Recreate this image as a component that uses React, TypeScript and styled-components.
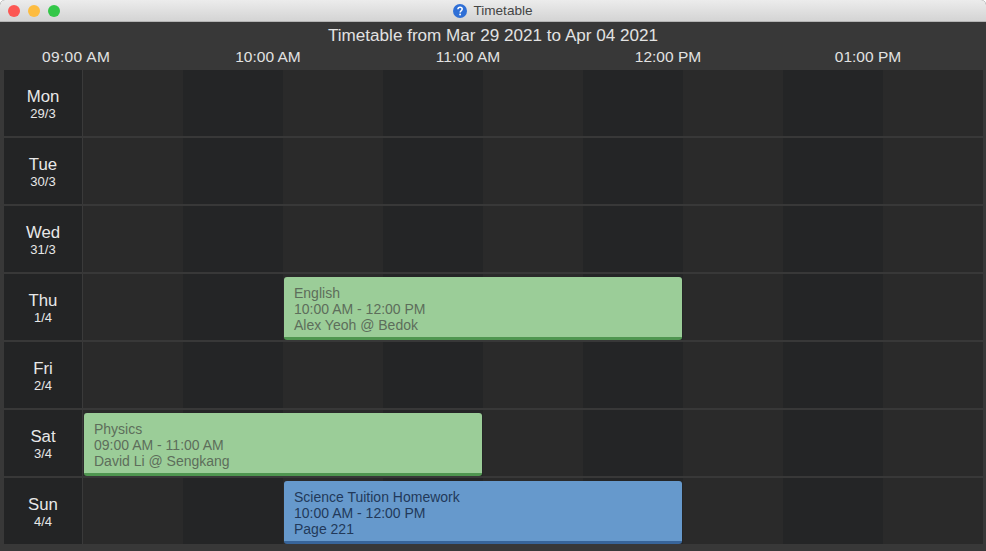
import styled, { createGlobalStyle } from 'styled-components';

const hours = ['09:00 AM', '10:00 AM', '11:00 AM', '12:00 PM', '01:00 PM'];

type EventItem = {
  name: string;
  time: string;
  detail: string;
  start: number;
  kind: 'lesson' | 'homework';
};

type Day = {
  day: string;
  date: string;
  event?: EventItem;
};

const days: Day[] = [
  { day: 'Mon', date: '29/3' },
  { day: 'Tue', date: '30/3' },
  { day: 'Wed', date: '31/3' },
  {
    day: 'Thu',
    date: '1/4',
    event: { name: 'English', time: '10:00 AM - 12:00 PM', detail: 'Alex Yeoh @ Bedok', start: 3, kind: 'lesson' },
  },
  { day: 'Fri', date: '2/4' },
  {
    day: 'Sat',
    date: '3/4',
    event: { name: 'Physics', time: '09:00 AM - 11:00 AM', detail: 'David Li @ Sengkang', start: 1, kind: 'lesson' },
  },
  {
    day: 'Sun',
    date: '4/4',
    event: { name: 'Science Tuition Homework', time: '10:00 AM - 12:00 PM', detail: 'Page 221', start: 3, kind: 'homework' },
  },
];

const slots = [0, 1, 2, 3, 4, 5, 6, 7, 8];

function App() {
  return (
    <>
      <GlobalStyle />
      <Window>
        <TitleBar>
          <Lights>
            <Light $color="#fc5753" />
            <Light $color="#fdbc40" />
            <Light $color="#33c748" />
          </Lights>
          <HelpIcon viewBox="0 0 14 14">
            <circle cx="7" cy="7" r="7" fill="#2f6fd6" />
            <path d="M4.9 5.3C5 4 5.9 3.3 7.1 3.3c1.3 0 2.1.8 2.1 1.8 0 .9-.5 1.3-1.1 1.7-.6.4-.9.7-.9 1.4v.3" fill="none" stroke="#fff" strokeWidth="1.5" />
            <circle cx="7.1" cy="10.5" r="0.95" fill="#fff" />
          </HelpIcon>
          <WindowTitle>Timetable</WindowTitle>
        </TitleBar>
        <Heading>Timetable from Mar 29 2021 to Apr 04 2021</Heading>
        <TimeAxis>
          {hours.map((hour) => (
            <TimeLabel key={hour}>{hour}</TimeLabel>
          ))}
        </TimeAxis>
        <Table>
          {days.map((d) => (
            <Row key={d.day}>
              <DayCell>
                <DayName>{d.day}</DayName>
                <DayDate>{d.date}</DayDate>
              </DayCell>
              <Track>
                {slots.map((s) => (
                  <Slot key={s} $dark={s % 2 === 1} style={{ gridColumn: s + 1 }} />
                ))}
                {d.event && (
                  <EventCard $kind={d.event.kind} style={{ gridColumn: `${d.event.start} / span 4` }}>
                    <div>{d.event.name}</div>
                    <div>{d.event.time}</div>
                    <div>{d.event.detail}</div>
                  </EventCard>
                )}
              </Track>
            </Row>
          ))}
        </Table>
      </Window>
    </>
  );
}

const GlobalStyle = createGlobalStyle`
  html, body {
    margin: 0;
    padding: 0;
    background: #fff;
    overflow: hidden;
  }
  body {
    font-family: "Liberation Sans", Arial, sans-serif;
  }
`;

const Window = styled.div`
  width: 986px;
  height: 551px;
  background: #383838;
  border-radius: 5px 5px 0 0;
  overflow: hidden;
`;

const TitleBar = styled.div`
  position: relative;
  display: flex;
  align-items: center;
  justify-content: center;
  box-sizing: border-box;
  height: 22px;
  background: linear-gradient(#ececec, #d4d4d4);
  border-bottom: 1px solid #b4b4b4;
`;

const Lights = styled.div`
  position: absolute;
  left: 8px;
  top: 5px;
  display: flex;
  gap: 8px;
`;

const Light = styled.span<{ $color: string }>`
  width: 12px;
  height: 12px;
  border-radius: 50%;
  background: ${(p) => p.$color};
`;

const HelpIcon = styled.svg`
  width: 14px;
  height: 14px;
  margin-right: 6px;
`;

const WindowTitle = styled.span`
  font-size: 13.6px;
  color: #454545;
`;

const Heading = styled.div`
  height: 26px;
  line-height: 27px;
  text-align: center;
  font-size: 17.1px;
  color: #e2e2e2;
`;

const TimeAxis = styled.div`
  display: flex;
  height: 22px;
  padding-left: 42px;
`;

const TimeLabel = styled.div`
  width: 200px;
  line-height: 18px;
  text-align: center;
  font-size: 15.5px;
  color: #e2e2e2;

  &:first-child {
    width: 126px;
    text-align: left;
    letter-spacing: 0.35px;
  }
`;

const Table = styled.div`
  display: flex;
  flex-direction: column;
  margin-left: 4px;
  width: 979px;
`;

const Row = styled.div`
  display: flex;
  height: 66px;
  margin-bottom: 2px;
`;

const DayCell = styled.div`
  display: flex;
  flex-direction: column;
  align-items: center;
  justify-content: center;
  width: 78px;
  padding-top: 2px;
  box-sizing: content-box;
  height: 64px;
  background: #232425;
  border-right: 1px solid #3a3a3a;
  color: #e8e8e8;
`;

const DayName = styled.div`
  font-size: 16.8px;
  line-height: 19px;
`;

const DayDate = styled.div`
  font-size: 13px;
  line-height: 15px;
`;

const Track = styled.div`
  flex: 1;
  display: grid;
  grid-template-columns: repeat(9, 100px);
  grid-template-rows: 66px;
`;

const Slot = styled.div<{ $dark: boolean }>`
  grid-row: 1;
  background: ${(p) => (p.$dark ? '#242526' : '#2a2a2a')};
`;

const EventCard = styled.div<{ $kind: 'lesson' | 'homework' }>`
  grid-row: 1;
  z-index: 1;
  box-sizing: border-box;
  height: 63px;
  margin: 3px 1px 0 1px;
  padding: 8px 10px 0;
  border-radius: 3px;
  font-size: 14px;
  line-height: 16px;
  background: ${(p) => (p.$kind === 'lesson' ? '#9bcd98' : '#6699cc')};
  color: ${(p) => (p.$kind === 'lesson' ? '#5d6e5b' : '#22395a')};
  border-bottom: 3px solid ${(p) => (p.$kind === 'lesson' ? '#4f9650' : '#38659a')};
`;

export default App;
